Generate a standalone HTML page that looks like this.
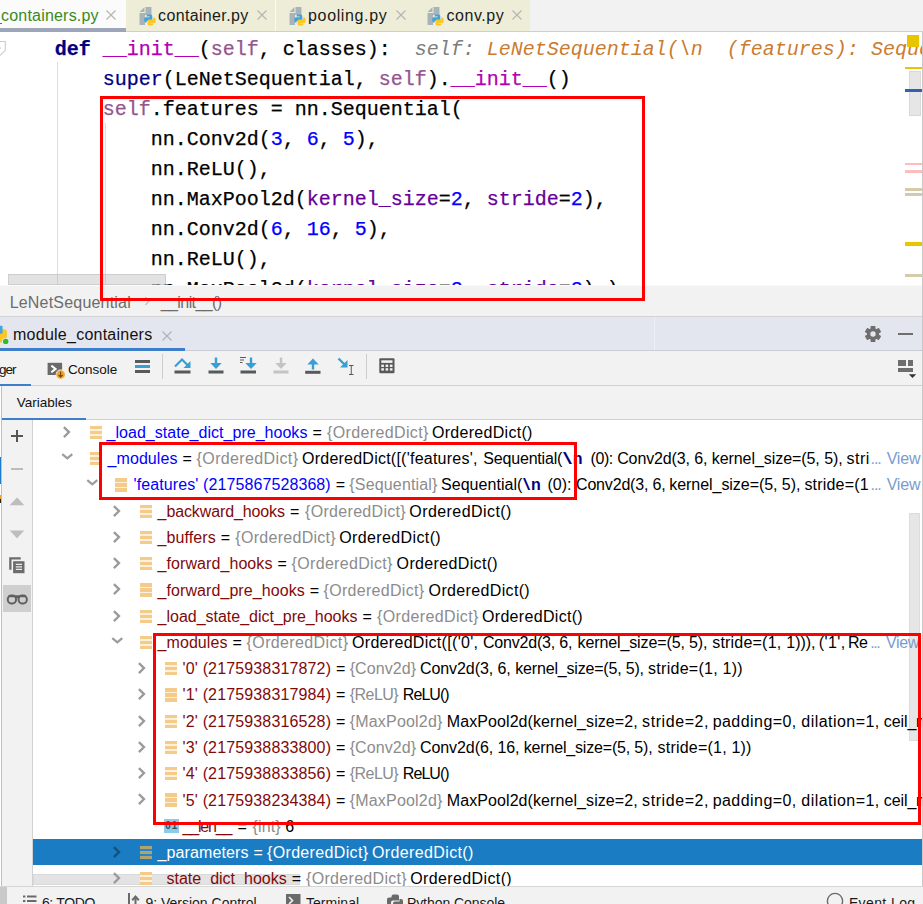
<!DOCTYPE html>
<html><head><meta charset="utf-8"><title>PyCharm</title>
<style>
html,body{margin:0;padding:0;}
body{width:923px;height:904px;overflow:hidden;position:relative;background:#fff;font-family:"Liberation Sans",sans-serif;font-size:16px;color:#000;}
#root{position:absolute;left:0;top:0;width:923px;height:904px;overflow:hidden;}
#root div, #root svg{position:absolute;}
.t{white-space:pre;line-height:20px;height:20px;font-size:16px;}
.code{font-family:"Liberation Mono",monospace;font-size:20px;-webkit-text-stroke:0.25px;white-space:pre;line-height:30px;height:30px;color:#000;}
.kw{color:#000080;font-weight:bold;}
.bi{color:#000080;}
.mg{color:#b200b2;}
.sf{color:#94558d;}
.nm{color:#0000ff;}
.kwa{color:#660099;}
.hg{color:#7d7d7d;font-style:italic;-webkit-text-stroke:0;}
.ho{color:#cb7b30;font-style:italic;-webkit-text-stroke:0;}
.redbox{border:3px solid #ff0000;box-sizing:border-box;}
</style></head><body>
<div id="root">
<div style="left:0;top:0;width:923px;height:31px;background:#f2f2f2;"></div>
<div style="left:0;top:31px;width:923px;height:1px;background:#cfcfcf;"></div>
<div style="left:0;top:0;width:126px;height:28px;background:#fbfbfb;"></div>
<div style="left:0;top:28px;width:126px;height:4px;background:#9da6b9;"></div>
<div style="left:126px;top:0;width:404px;height:31px;background:#eeeed8;"></div>
<div style="left:275px;top:0;width:1px;height:31px;background:#fbfbe9;"></div>
<div class="t" style="left:1.00px;top:6.00px;color:#3a8a1c;letter-spacing:0.203px;">containers.py</div>
<div style="left:0;top:23px;width:2px;height:1px;background:#3a8a1c;"></div>
<svg style="left:106px;top:10.3px" width="10" height="10" viewBox="0 0 10 10"><path d="M0.5 0.5 L9.5 9.5 M9.5 0.5 L0.5 9.5" stroke="#b4b4b4" stroke-width="1.1" fill="none"/></svg>
<svg style="left:138.6px;top:7.2px" width="18" height="20" viewBox="0 0 18 20"><path d="M0.5 5 L5.5 0 L5.5 5 Z" fill="#a9b3ba"/><path d="M6.5 0 H12.5 V8 H6 V18 H0.5 V6 H6.5 Z" fill="#a9b3ba"/><path d="M9 7.6 h2.6 a1.7 1.7 0 0 1 1.7 1.7 v3 a1.4 1.4 0 0 1 -1.4 1.4 h-3 a1.4 1.4 0 0 0 -1.4 1.4 v0.5 h-0.6 a1.6 1.6 0 0 1 -1.6 -1.6 v-2.2 a1.6 1.6 0 0 1 1.6 -1.6 h3.8 v-0.6 h-3.1 v-0.6 a1.4 1.4 0 0 1 1.4 -1.4 z" fill="#41a2dc"/><path d="M12.9 18.6 h-2.6 a1.7 1.7 0 0 1 -1.7 -1.7 v-3 a1.4 1.4 0 0 1 1.4 -1.4 h3 a1.4 1.4 0 0 0 1.4 -1.4 v-0.5 h0.6 a1.6 1.6 0 0 1 1.6 1.6 v2.2 a1.6 1.6 0 0 1 -1.6 1.6 h-3.8 v0.6 h3.1 v0.6 a1.4 1.4 0 0 1 -1.4 1.4 z" fill="#fcc624"/></svg>
<div class="t" style="left:158.10px;top:6.00px;color:#1a1a1a;letter-spacing:0.347px;">container.py</div>
<svg style="left:256.5px;top:10.3px" width="10" height="10" viewBox="0 0 10 10"><path d="M0.5 0.5 L9.5 9.5 M9.5 0.5 L0.5 9.5" stroke="#b4b4b4" stroke-width="1.1" fill="none"/></svg>
<svg style="left:288.6px;top:7.2px" width="18" height="20" viewBox="0 0 18 20"><path d="M0.5 5 L5.5 0 L5.5 5 Z" fill="#a9b3ba"/><path d="M6.5 0 H12.5 V8 H6 V18 H0.5 V6 H6.5 Z" fill="#a9b3ba"/><path d="M9 7.6 h2.6 a1.7 1.7 0 0 1 1.7 1.7 v3 a1.4 1.4 0 0 1 -1.4 1.4 h-3 a1.4 1.4 0 0 0 -1.4 1.4 v0.5 h-0.6 a1.6 1.6 0 0 1 -1.6 -1.6 v-2.2 a1.6 1.6 0 0 1 1.6 -1.6 h3.8 v-0.6 h-3.1 v-0.6 a1.4 1.4 0 0 1 1.4 -1.4 z" fill="#41a2dc"/><path d="M12.9 18.6 h-2.6 a1.7 1.7 0 0 1 -1.7 -1.7 v-3 a1.4 1.4 0 0 1 1.4 -1.4 h3 a1.4 1.4 0 0 0 1.4 -1.4 v-0.5 h0.6 a1.6 1.6 0 0 1 1.6 1.6 v2.2 a1.6 1.6 0 0 1 -1.6 1.6 h-3.8 v0.6 h3.1 v0.6 a1.4 1.4 0 0 1 -1.4 1.4 z" fill="#fcc624"/></svg>
<div class="t" style="left:308.10px;top:6.00px;color:#1a1a1a;letter-spacing:0.628px;">pooling.py</div>
<svg style="left:395.5px;top:10.3px" width="10" height="10" viewBox="0 0 10 10"><path d="M0.5 0.5 L9.5 9.5 M9.5 0.5 L0.5 9.5" stroke="#b4b4b4" stroke-width="1.1" fill="none"/></svg>
<svg style="left:426.6px;top:7.2px" width="18" height="20" viewBox="0 0 18 20"><path d="M0.5 5 L5.5 0 L5.5 5 Z" fill="#a9b3ba"/><path d="M6.5 0 H12.5 V8 H6 V18 H0.5 V6 H6.5 Z" fill="#a9b3ba"/><path d="M9 7.6 h2.6 a1.7 1.7 0 0 1 1.7 1.7 v3 a1.4 1.4 0 0 1 -1.4 1.4 h-3 a1.4 1.4 0 0 0 -1.4 1.4 v0.5 h-0.6 a1.6 1.6 0 0 1 -1.6 -1.6 v-2.2 a1.6 1.6 0 0 1 1.6 -1.6 h3.8 v-0.6 h-3.1 v-0.6 a1.4 1.4 0 0 1 1.4 -1.4 z" fill="#41a2dc"/><path d="M12.9 18.6 h-2.6 a1.7 1.7 0 0 1 -1.7 -1.7 v-3 a1.4 1.4 0 0 1 1.4 -1.4 h3 a1.4 1.4 0 0 0 1.4 -1.4 v-0.5 h0.6 a1.6 1.6 0 0 1 1.6 1.6 v2.2 a1.6 1.6 0 0 1 -1.6 1.6 h-3.8 v0.6 h3.1 v0.6 a1.4 1.4 0 0 1 -1.4 1.4 z" fill="#fcc624"/></svg>
<div class="t" style="left:446.60px;top:6.00px;color:#1a1a1a;letter-spacing:0.524px;">conv.py</div>
<svg style="left:511.5px;top:10.3px" width="10" height="10" viewBox="0 0 10 10"><path d="M0.5 0.5 L9.5 9.5 M9.5 0.5 L0.5 9.5" stroke="#b4b4b4" stroke-width="1.1" fill="none"/></svg>
<div id="editor" style="left:0;top:32px;width:922px;height:254px;background:#fff;overflow:hidden;">
<div class="code" style="left:54.7px;top:3px;"><span class="kw">def</span> <span class="mg">__init__</span>(<span class="sf">self</span>, classes):  <span class="hg">self: </span><span class="ho">LeNetSequential(\n  (features): Sequential(\n</span></div>
<div class="code" style="left:102.7px;top:33px;"><span class="bi">super</span>(LeNetSequential, <span class="sf">self</span>).<span class="mg">__init__</span>()</div>
<div class="code" style="left:102.7px;top:63px;"><span class="sf">self</span>.features = nn.Sequential(</div>
<div class="code" style="left:150.7px;top:93px;">nn.Conv2d(<span class="nm">3</span>, <span class="nm">6</span>, <span class="nm">5</span>),</div>
<div class="code" style="left:150.7px;top:123px;">nn.ReLU(),</div>
<div class="code" style="left:150.7px;top:153px;">nn.MaxPool2d(<span class="kwa">kernel_size</span>=<span class="nm">2</span>, <span class="kwa">stride</span>=<span class="nm">2</span>),</div>
<div class="code" style="left:150.7px;top:183px;">nn.Conv2d(<span class="nm">6</span>, <span class="nm">16</span>, <span class="nm">5</span>),</div>
<div class="code" style="left:150.7px;top:213px;">nn.ReLU(),</div>
<div class="code" style="left:150.7px;top:243px;">nn.MaxPool2d(<span class="kwa">kernel_size</span>=<span class="nm">2</span>, <span class="kwa">stride</span>=<span class="nm">2</span>),)</div>
<div style="left:57px;top:30px;width:1px;height:230px;background:#dcdcdc;"></div>
<div style="left:105px;top:91px;width:1px;height:170px;background:#dcdcdc;"></div>
<svg style="left:0;top:8.3px" width="8" height="16" viewBox="0 0 8 16"><path d="M-1 1.5 H5.3 V10.3 L0.3 15.3 H-1" fill="#fff" stroke="#cbcbcb" stroke-width="1.1"/><path d="M-1 8 H1" stroke="#c4c4c4" stroke-width="1"/></svg>
<div style="left:7.5px;top:242px;width:158px;height:11.3px;background:rgba(190,190,190,0.45);box-shadow:inset 0 0 0 1px rgba(170,170,170,0.35);"></div>
<div style="left:907px;top:3px;width:12px;height:12px;background:#e9c500;"></div>
<div style="left:905px;top:35px;width:17px;height:2px;background:#e9c500;"></div>
<div style="left:909px;top:39px;width:12px;height:45px;background:#e6e6e6;box-shadow:inset 0 0 0 1px #d8d8d8;"></div>
<div style="left:905px;top:57px;width:17px;height:3px;background:#3a5faa;"></div>
<div style="left:905px;top:131px;width:17px;height:2px;background:#ffbcbc;"></div>
<div style="left:905px;top:138px;width:17px;height:3px;background:#ffbcbc;"></div>
<div style="left:905px;top:156px;width:17px;height:3px;background:#d6cba8;"></div>
<div style="left:905px;top:161px;width:17px;height:3px;background:#d6cba8;"></div>
<div style="left:905px;top:210px;width:17px;height:4px;background:#e9c500;"></div>
<div style="left:905px;top:242px;width:17px;height:3px;background:#d6cba8;"></div>
</div>
<div style="left:0;top:285px;width:923px;height:1px;background:#fbfbfb;"></div>
<div id="crumb" style="left:0;top:286px;width:923px;height:30px;background:#f2f2f2;"></div>
<div style="left:0;top:316px;width:923px;height:1px;background:#d4d4d4;"></div>
<div class="t" style="left:9.70px;top:293.00px;color:#6c6c6c;letter-spacing:0.192px;">LeNetSequential</div>
<svg style="left:144px;top:295.5px" width="7" height="10" viewBox="0 0 7 10"><path d="M1.5 1 L5 5 L1.5 9" fill="none" stroke="#b0b0b0" stroke-width="1.1"/></svg>
<div class="t" style="left:160.70px;top:293.00px;color:#6c6c6c;letter-spacing:-0.578px;">__init__()</div>
<div id="dbghead" style="left:0;top:317px;width:923px;height:33px;background:#e3e6ef;"></div>
<div style="left:654px;top:317px;width:1px;height:33px;background:#eef0f6;"></div>
<div style="left:0;top:350px;width:923px;height:1px;background:#c9ccd4;"></div>
<div style="left:0;top:347.5px;width:184.5px;height:3.3px;background:#3f7fc9;"></div>
<svg style="left:0;top:322px" width="12" height="24" viewBox="0 0 12 24"><path d="M-4 7.3 H4.5 A2.4 2.4 0 0 1 6.9 9.7 V15 A2.6 2.6 0 0 1 4.3 17.6 H2.5 V20.6 H-4 Z" fill="#fcc624"/><rect x="-4" y="3.8" width="6.6" height="8" rx="1.2" fill="#4aa3dc"/><circle cx="5.7" cy="19.4" r="3.5" fill="#e3e6ef"/><circle cx="5.7" cy="19.4" r="2.7" fill="#24c024"/></svg>
<div class="t" style="left:13.00px;top:325.00px;color:#111;letter-spacing:0.250px;">module_containers</div>
<svg style="left:161.5px;top:331px" width="10" height="10" viewBox="0 0 10 10"><path d="M0.5 0.5 L9.5 9.5 M9.5 0.5 L0.5 9.5" stroke="#aeb1b8" stroke-width="1.1" fill="none"/></svg>
<svg style="left:864px;top:325px" width="18" height="18" viewBox="-9 -9 18 18"><g fill="#6e6e6e"><circle r="6.1"/>
<rect x="-2.4" y="-8.1" width="4.8" height="16.2" rx="0.5"/><rect x="-2.4" y="-8.1" width="4.8" height="16.2" rx="0.5" transform="rotate(60)"/><rect x="-2.4" y="-8.1" width="4.8" height="16.2" rx="0.5" transform="rotate(120)"/></g><circle r="2.7" fill="#e3e6ef"/></svg>
<div style="left:898px;top:333px;width:15px;height:2px;background:#6e6e6e;"></div>
<div id="toolbar" style="left:0;top:351px;width:923px;height:34px;background:#f2f2f2;"></div>
<div style="left:0;top:385px;width:923px;height:1px;background:#d1d1d1;"></div>
<div style="left:0;top:384px;width:31px;height:2px;background:#3f7fc9;"></div>
<div class="t" style="left:-1.09px;top:360.00px;color:#111;font-size:13.5px;letter-spacing:-0.915px;">ger</div>
<svg style="left:47px;top:362px" width="19" height="18" viewBox="0 0 19 18"><rect x="0.6" y="0.8" width="14.5" height="12.2" fill="#6a6a6a"/><path d="M4.3 3.6 L8.6 6.9 L4.3 10.2" fill="none" stroke="#fff" stroke-width="2"/><circle cx="13.6" cy="12.5" r="4.9" fill="#f2f2f2"/><circle cx="13.6" cy="12.5" r="4.3" fill="#f4a62a"/><path d="M13.6 9.6 V14.8 M11.5 12.8 L13.6 15 L15.7 12.8" fill="none" stroke="#6b4300" stroke-width="1.1"/></svg>
<div class="t" style="left:67.91px;top:360.00px;color:#111;font-size:13.5px;letter-spacing:-0.042px;">Console</div>
<div style="left:134.5px;top:360px;width:15px;height:3px;background:#595959;"></div>
<div style="left:134.5px;top:365px;width:15px;height:3px;background:#389fd6;"></div>
<div style="left:134.5px;top:370px;width:15px;height:3px;background:#595959;"></div>
<div style="left:162px;top:354px;width:1px;height:25px;background:#cdcdcd;"></div>
<div style="left:366px;top:354px;width:1px;height:25px;background:#cdcdcd;"></div>
<svg style="left:173px;top:355px" width="20" height="20" viewBox="0 0 20 20"><path d="M2 11.5 L9 4.5 L15 10.5" fill="none" stroke="#389fd6" stroke-width="2.2"/><path d="M17.5 6 V13 H10.5 Z" fill="#389fd6"/><rect x="1.5" y="15.5" width="16" height="3" fill="#595959"/></svg>
<svg style="left:206px;top:355px" width="20" height="20" viewBox="0 0 20 20"><path d="M10 2.5 V10" stroke="#389fd6" stroke-width="2.4" fill="none"/><path d="M4.3 8 H15.7 L10 14 Z" fill="#389fd6"/><rect x="2.5" y="15.5" width="15" height="3" fill="#595959"/></svg>
<svg style="left:238px;top:355px" width="22" height="20" viewBox="0 0 22 20"><path d="M13 2.5 V10" stroke="#389fd6" stroke-width="2.4" fill="none"/><path d="M7.3 8 H18.7 L13 14 Z" fill="#389fd6"/><rect x="2.5" y="15.5" width="15.5" height="3" fill="#595959"/><path d="M2 2.5 H8 M2 5 H6 M2 7.5 H4.5" stroke="#595959" stroke-width="1.1"/></svg>
<svg style="left:271px;top:355px" width="20" height="20" viewBox="0 0 20 20"><path d="M10 2.5 V10" stroke="#c4c4c4" stroke-width="2.4" fill="none"/><path d="M4.3 8 H15.7 L10 14 Z" fill="#c4c4c4"/><rect x="2.5" y="15.5" width="15" height="3" fill="#c4c4c4"/></svg>
<svg style="left:303px;top:355px" width="20" height="20" viewBox="0 0 20 20"><path d="M10 14.5 V8" stroke="#389fd6" stroke-width="2.4" fill="none"/><path d="M4.3 9.5 H15.7 L10 3.5 Z" fill="#389fd6"/><rect x="2.2" y="15.8" width="15.3" height="3" fill="#595959"/></svg>
<svg style="left:336px;top:355px" width="22" height="22" viewBox="0 0 22 22"><path d="M2.5 3.5 L8.5 9.5" stroke="#389fd6" stroke-width="2.4" fill="none"/><path d="M11.5 5 V12.5 H4 Z" fill="#389fd6"/><path d="M13 10.5 H17.5 M13 19.5 H17.5 M15.25 10.5 V19.5" stroke="#595959" stroke-width="1" fill="none"/></svg>
<svg style="left:379px;top:358px" width="16" height="16" viewBox="0 0 16 16"><rect x="0.3" y="0.3" width="15.2" height="15" rx="1" fill="#595959"/><rect x="2.3" y="2.3" width="11.2" height="2.6" fill="#f2f2f2"/><rect x="2.3" y="6.6" width="2.6" height="2.4" fill="#f2f2f2"/><rect x="6.6" y="6.6" width="2.6" height="2.4" fill="#f2f2f2"/><rect x="10.9" y="6.6" width="2.6" height="2.4" fill="#f2f2f2"/><rect x="2.3" y="10.2" width="2.6" height="2.4" fill="#f2f2f2"/><rect x="6.6" y="10.2" width="2.6" height="2.4" fill="#f2f2f2"/><rect x="10.9" y="10.2" width="2.6" height="2.4" fill="#f2f2f2"/></svg>
<div style="left:897.5px;top:360px;width:8.5px;height:6px;background:#6e6e6e;"></div>
<div style="left:908px;top:360px;width:4.5px;height:6px;background:#6e6e6e;"></div>
<div style="left:897.5px;top:367.5px;width:15px;height:4.5px;background:#6e6e6e;"></div>
<svg style="left:908px;top:374px" width="9" height="5" viewBox="0 0 9 5"><path d="M0.8 0.2 H8.2 L4.5 4 Z" fill="#333"/></svg>
<div id="varhead" style="left:0;top:386px;width:923px;height:33px;background:#f2f2f2;"></div>
<div style="left:0;top:419px;width:923px;height:1px;background:#d1d1d1;"></div>
<div class="t" style="left:16.81px;top:393.00px;color:#111;font-size:13.5px;">Variables</div>
<div id="tree" style="left:33px;top:420px;width:889px;height:466px;background:#fff;overflow:hidden;">
<div style="left:876px;top:93px;width:11px;height:228px;background:#e6e6e6;box-shadow:inset 0 0 0 1px #dcdcdc;"></div>
<div style="left:0px;top:454px;width:267px;height:11px;background:#e3e3e3;box-shadow:inset 0 0 0 1px #d9d9d9;"></div>
<svg style="left:29.0px;top:5.9px" width="10" height="13" viewBox="0 0 10 13"><path d="M1.9 1.1 L7 6.1 L1.9 11.1" fill="none" stroke="#9b9b9b" stroke-width="2.3"/></svg>
<div style="left:57.1px;top:5.8px;width:12px;height:13.4px;background:#fdf1de;"></div><div style="left:57.1px;top:5.8px;width:12px;height:3.3px;background:#f5cb8a;"></div><div style="left:57.1px;top:10.9px;width:12px;height:3.3px;background:#f5cb8a;"></div><div style="left:57.1px;top:15.9px;width:12px;height:3.3px;background:#f5cb8a;"></div>
<div class="t" style="left:279.50px;top:3.00px;color:#000;letter-spacing:0.556px;">=</div>
<div class="t" style="left:73.60px;top:3.00px;color:#0000ff;letter-spacing:0.026px;">_load_state_dict_pre_hooks</div>
<div class="t" style="left:294.00px;top:3.00px;color:#8c8c8c;letter-spacing:0.372px;">{OrderedDict}</div>
<div class="t" style="left:399.00px;top:3.00px;color:#000;letter-spacing:0.291px;">OrderedDict()</div>
<svg style="left:28.4px;top:32.9px" width="13" height="8" viewBox="0 0 13 8"><path d="M1.3 1.2 L6.3 5.4 L11.3 1.2" fill="none" stroke="#9b9b9b" stroke-width="2.2"/></svg>
<div style="left:57.1px;top:32.1px;width:12px;height:13.4px;background:#fdf1de;"></div><div style="left:57.1px;top:32.1px;width:12px;height:3.3px;background:#f5cb8a;"></div><div style="left:57.1px;top:37.1px;width:12px;height:3.3px;background:#f5cb8a;"></div><div style="left:57.1px;top:42.2px;width:12px;height:3.3px;background:#f5cb8a;"></div>
<div class="t" style="left:149.50px;top:29.00px;color:#000;letter-spacing:0.556px;">=</div>
<div class="t" style="left:74.60px;top:29.00px;color:#0000ff;letter-spacing:0.061px;">_modules</div>
<div class="t" style="left:163.60px;top:29.00px;color:#8c8c8c;letter-spacing:0.372px;">{OrderedDict}</div>
<div class="t" style="left:269.00px;top:29.00px;color:#000;letter-spacing:0.237px;">OrderedDict([('features',</div>
<div class="t" style="left:450.30px;top:29.00px;color:#000;letter-spacing:-0.185px;">Sequential(</div>
<div class="t" style="left:529.60px;top:29.00px;color:#000080;transform:scaleX(2.002);transform-origin:0 0;">\</div>
<div class="t" style="left:539.70px;top:29.00px;color:#000080;font-weight:bold;letter-spacing:-0.773px;">n</div>
<div class="t" style="left:557.60px;top:29.00px;color:#000;letter-spacing:-0.467px;">(0):</div>
<div class="t" style="left:584.20px;top:29.00px;color:#000;letter-spacing:-0.119px;">Conv2d(3, 6,</div>
<div class="t" style="left:678.70px;top:29.00px;color:#000;letter-spacing:-0.059px;">kernel_size=(5, 5),</div>
<div class="t" style="left:813.60px;top:29.00px;color:#000;letter-spacing:0.457px;">stri</div>
<div class="t" style="left:837.50px;top:29.00px;color:#7ea3d3;letter-spacing:-1.068px;">...</div>
<div class="t" style="left:853.70px;top:29.00px;color:#779dd0;letter-spacing:-0.197px;">View</div>
<svg style="left:53.4px;top:59.2px" width="13" height="8" viewBox="0 0 13 8"><path d="M1.3 1.2 L6.3 5.4 L11.3 1.2" fill="none" stroke="#9b9b9b" stroke-width="2.2"/></svg>
<div style="left:82.2px;top:58.3px;width:12px;height:13.4px;background:#fdf1de;"></div><div style="left:82.2px;top:58.3px;width:12px;height:3.3px;background:#f5cb8a;"></div><div style="left:82.2px;top:63.4px;width:12px;height:3.3px;background:#f5cb8a;"></div><div style="left:82.2px;top:68.4px;width:12px;height:3.3px;background:#f5cb8a;"></div>
<div class="t" style="left:302.80px;top:55.00px;color:#000;letter-spacing:0.556px;">=</div>
<div class="t" style="left:100.60px;top:55.00px;color:#0000ff;letter-spacing:0.096px;">'features' (2175867528368)</div>
<div class="t" style="left:316.30px;top:55.00px;color:#8c8c8c;letter-spacing:0.163px;">{Sequential}</div>
<div class="t" style="left:408.00px;top:55.00px;color:#000;letter-spacing:0.045px;">Sequential(</div>
<div class="t" style="left:489.60px;top:55.00px;color:#000080;transform:scaleX(1.602);transform-origin:0 0;">\</div>
<div class="t" style="left:498.00px;top:55.00px;color:#000080;font-weight:bold;letter-spacing:-0.773px;">n</div>
<div class="t" style="left:514.60px;top:55.00px;color:#000;letter-spacing:-0.067px;">(0):</div>
<div class="t" style="left:543.00px;top:55.00px;color:#000;letter-spacing:-0.174px;">Conv2d(3, 6,</div>
<div class="t" style="left:636.30px;top:55.00px;color:#000;letter-spacing:-0.053px;">kernel_size=(5, 5),</div>
<div class="t" style="left:771.40px;top:55.00px;color:#000;letter-spacing:0.201px;">stride=(1</div>
<div class="t" style="left:837.50px;top:55.00px;color:#7ea3d3;letter-spacing:-1.068px;">...</div>
<div class="t" style="left:853.70px;top:55.00px;color:#779dd0;letter-spacing:-0.197px;">View</div>
<svg style="left:79.0px;top:84.6px" width="10" height="13" viewBox="0 0 10 13"><path d="M1.9 1.1 L7 6.1 L1.9 11.1" fill="none" stroke="#9b9b9b" stroke-width="2.3"/></svg>
<div style="left:107.4px;top:84.6px;width:12px;height:13.4px;background:#fdf1de;"></div><div style="left:107.4px;top:84.6px;width:12px;height:3.3px;background:#f5cb8a;"></div><div style="left:107.4px;top:89.6px;width:12px;height:3.3px;background:#f5cb8a;"></div><div style="left:107.4px;top:94.7px;width:12px;height:3.3px;background:#f5cb8a;"></div>
<div class="t" style="left:257.10px;top:82.00px;color:#000;letter-spacing:0.556px;">=</div>
<div class="t" style="left:124.60px;top:82.00px;color:#7f0a0a;letter-spacing:-0.112px;">_backward_hooks</div>
<div class="t" style="left:272.00px;top:82.00px;color:#8c8c8c;letter-spacing:0.314px;">{OrderedDict}</div>
<div class="t" style="left:376.30px;top:82.00px;color:#000;letter-spacing:0.433px;">OrderedDict()</div>
<svg style="left:79.0px;top:110.9px" width="10" height="13" viewBox="0 0 10 13"><path d="M1.9 1.1 L7 6.1 L1.9 11.1" fill="none" stroke="#9b9b9b" stroke-width="2.3"/></svg>
<div style="left:107.4px;top:110.8px;width:12px;height:13.4px;background:#fdf1de;"></div><div style="left:107.4px;top:110.8px;width:12px;height:3.3px;background:#f5cb8a;"></div><div style="left:107.4px;top:115.8px;width:12px;height:3.3px;background:#f5cb8a;"></div><div style="left:107.4px;top:120.9px;width:12px;height:3.3px;background:#f5cb8a;"></div>
<div class="t" style="left:187.80px;top:108.00px;color:#000;letter-spacing:0.556px;">=</div>
<div class="t" style="left:124.60px;top:108.00px;color:#7f0a0a;letter-spacing:0.082px;">_buffers</div>
<div class="t" style="left:202.30px;top:108.00px;color:#8c8c8c;letter-spacing:0.289px;">{OrderedDict}</div>
<div class="t" style="left:306.30px;top:108.00px;color:#000;letter-spacing:0.374px;">OrderedDict()</div>
<svg style="left:79.0px;top:137.1px" width="10" height="13" viewBox="0 0 10 13"><path d="M1.9 1.1 L7 6.1 L1.9 11.1" fill="none" stroke="#9b9b9b" stroke-width="2.3"/></svg>
<div style="left:107.4px;top:137.0px;width:12px;height:13.4px;background:#fdf1de;"></div><div style="left:107.4px;top:137.0px;width:12px;height:3.3px;background:#f5cb8a;"></div><div style="left:107.4px;top:142.1px;width:12px;height:3.3px;background:#f5cb8a;"></div><div style="left:107.4px;top:147.1px;width:12px;height:3.3px;background:#f5cb8a;"></div>
<div class="t" style="left:244.50px;top:134.00px;color:#000;letter-spacing:0.556px;">=</div>
<div class="t" style="left:124.60px;top:134.00px;color:#7f0a0a;letter-spacing:0.074px;">_forward_hooks</div>
<div class="t" style="left:258.60px;top:134.00px;color:#8c8c8c;letter-spacing:0.322px;">{OrderedDict}</div>
<div class="t" style="left:363.60px;top:134.00px;color:#000;letter-spacing:0.349px;">OrderedDict()</div>
<svg style="left:79.0px;top:163.4px" width="10" height="13" viewBox="0 0 10 13"><path d="M1.9 1.1 L7 6.1 L1.9 11.1" fill="none" stroke="#9b9b9b" stroke-width="2.3"/></svg>
<div style="left:107.4px;top:163.3px;width:12px;height:13.4px;background:#fdf1de;"></div><div style="left:107.4px;top:163.3px;width:12px;height:3.3px;background:#f5cb8a;"></div><div style="left:107.4px;top:168.3px;width:12px;height:3.3px;background:#f5cb8a;"></div><div style="left:107.4px;top:173.4px;width:12px;height:3.3px;background:#f5cb8a;"></div>
<div class="t" style="left:276.80px;top:161.00px;color:#000;letter-spacing:0.556px;">=</div>
<div class="t" style="left:124.60px;top:161.00px;color:#7f0a0a;letter-spacing:0.073px;">_forward_pre_hooks</div>
<div class="t" style="left:290.60px;top:161.00px;color:#8c8c8c;letter-spacing:0.289px;">{OrderedDict}</div>
<div class="t" style="left:395.60px;top:161.00px;color:#000;letter-spacing:0.349px;">OrderedDict()</div>
<svg style="left:79.0px;top:189.6px" width="10" height="13" viewBox="0 0 10 13"><path d="M1.9 1.1 L7 6.1 L1.9 11.1" fill="none" stroke="#9b9b9b" stroke-width="2.3"/></svg>
<div style="left:107.4px;top:189.5px;width:12px;height:13.4px;background:#fdf1de;"></div><div style="left:107.4px;top:189.5px;width:12px;height:3.3px;background:#f5cb8a;"></div><div style="left:107.4px;top:194.6px;width:12px;height:3.3px;background:#f5cb8a;"></div><div style="left:107.4px;top:199.6px;width:12px;height:3.3px;background:#f5cb8a;"></div>
<div class="t" style="left:329.50px;top:187.00px;color:#000;letter-spacing:0.556px;">=</div>
<div class="t" style="left:124.60px;top:187.00px;color:#7f0a0a;letter-spacing:-0.014px;">_load_state_dict_pre_hooks</div>
<div class="t" style="left:344.00px;top:187.00px;color:#8c8c8c;letter-spacing:0.372px;">{OrderedDict}</div>
<div class="t" style="left:449.00px;top:187.00px;color:#000;letter-spacing:0.316px;">OrderedDict()</div>
<svg style="left:78.4px;top:216.7px" width="13" height="8" viewBox="0 0 13 8"><path d="M1.3 1.2 L6.3 5.4 L11.3 1.2" fill="none" stroke="#9b9b9b" stroke-width="2.2"/></svg>
<div style="left:107.4px;top:215.8px;width:12px;height:13.4px;background:#fdf1de;"></div><div style="left:107.4px;top:215.8px;width:12px;height:3.3px;background:#f5cb8a;"></div><div style="left:107.4px;top:220.8px;width:12px;height:3.3px;background:#f5cb8a;"></div><div style="left:107.4px;top:225.9px;width:12px;height:3.3px;background:#f5cb8a;"></div>
<div class="t" style="left:199.50px;top:213.00px;color:#000;letter-spacing:0.556px;">=</div>
<div class="t" style="left:124.60px;top:213.00px;color:#7f0a0a;letter-spacing:0.061px;">_modules</div>
<div class="t" style="left:213.60px;top:213.00px;color:#8c8c8c;letter-spacing:0.372px;">{OrderedDict}</div>
<div class="t" style="left:319.00px;top:213.00px;color:#000;letter-spacing:0.306px;">OrderedDict([('0',</div>
<div class="t" style="left:449.90px;top:213.00px;color:#000;letter-spacing:-0.183px;">Conv2d(3, 6,</div>
<div class="t" style="left:544.60px;top:213.00px;color:#000;letter-spacing:-0.120px;">kernel_size=(5, 5),</div>
<div class="t" style="left:679.20px;top:213.00px;color:#000;letter-spacing:0.207px;">stride=(1,</div>
<div class="t" style="left:753.30px;top:213.00px;color:#000;letter-spacing:-0.057px;">1))),</div>
<div class="t" style="left:785.80px;top:213.00px;color:#000;letter-spacing:0.380px;">('1',</div>
<div class="t" style="left:815.10px;top:213.00px;color:#000;letter-spacing:-0.653px;">Re</div>
<div class="t" style="left:837.30px;top:213.00px;color:#7ea3d3;letter-spacing:-1.468px;">...</div>
<div class="t" style="left:853.00px;top:213.00px;color:#779dd0;letter-spacing:-0.397px;">View</div>
<svg style="left:104.3px;top:242.1px" width="10" height="13" viewBox="0 0 10 13"><path d="M1.9 1.1 L7 6.1 L1.9 11.1" fill="none" stroke="#9b9b9b" stroke-width="2.3"/></svg>
<div style="left:132.1px;top:242.0px;width:12px;height:13.4px;background:#fdf1de;"></div><div style="left:132.1px;top:242.0px;width:12px;height:3.3px;background:#f5cb8a;"></div><div style="left:132.1px;top:247.1px;width:12px;height:3.3px;background:#f5cb8a;"></div><div style="left:132.1px;top:252.1px;width:12px;height:3.3px;background:#f5cb8a;"></div>
<div class="t" style="left:303.10px;top:239.00px;color:#000;letter-spacing:0.556px;">=</div>
<div class="t" style="left:149.60px;top:239.00px;color:#7f0a0a;letter-spacing:0.145px;">'0' (2175938317872)</div>
<div class="t" style="left:316.70px;top:239.00px;color:#8c8c8c;letter-spacing:0.081px;">{Conv2d}</div>
<div class="t" style="left:387.00px;top:239.00px;color:#000;letter-spacing:-0.083px;">Conv2d(3, 6,</div>
<div class="t" style="left:482.30px;top:239.00px;color:#000;letter-spacing:-0.187px;">kernel_size=(5, 5),</div>
<div class="t" style="left:615.10px;top:239.00px;color:#000;letter-spacing:0.266px;">stride=(1, 1))</div>
<svg style="left:104.3px;top:268.4px" width="10" height="13" viewBox="0 0 10 13"><path d="M1.9 1.1 L7 6.1 L1.9 11.1" fill="none" stroke="#9b9b9b" stroke-width="2.3"/></svg>
<div style="left:132.1px;top:268.3px;width:12px;height:13.4px;background:#fdf1de;"></div><div style="left:132.1px;top:268.3px;width:12px;height:3.3px;background:#f5cb8a;"></div><div style="left:132.1px;top:273.3px;width:12px;height:3.3px;background:#f5cb8a;"></div><div style="left:132.1px;top:278.4px;width:12px;height:3.3px;background:#f5cb8a;"></div>
<div class="t" style="left:303.10px;top:265.00px;color:#000;letter-spacing:0.556px;">=</div>
<div class="t" style="left:149.60px;top:265.00px;color:#7f0a0a;letter-spacing:0.145px;">'1' (2175938317984)</div>
<div class="t" style="left:316.70px;top:265.00px;color:#8c8c8c;letter-spacing:-0.519px;">{ReLU}</div>
<div class="t" style="left:369.80px;top:265.00px;color:#000;letter-spacing:-0.933px;">ReLU()</div>
<svg style="left:104.3px;top:294.6px" width="10" height="13" viewBox="0 0 10 13"><path d="M1.9 1.1 L7 6.1 L1.9 11.1" fill="none" stroke="#9b9b9b" stroke-width="2.3"/></svg>
<div style="left:132.1px;top:294.5px;width:12px;height:13.4px;background:#fdf1de;"></div><div style="left:132.1px;top:294.5px;width:12px;height:3.3px;background:#f5cb8a;"></div><div style="left:132.1px;top:299.6px;width:12px;height:3.3px;background:#f5cb8a;"></div><div style="left:132.1px;top:304.6px;width:12px;height:3.3px;background:#f5cb8a;"></div>
<div class="t" style="left:303.10px;top:292.00px;color:#000;letter-spacing:0.556px;">=</div>
<div class="t" style="left:149.60px;top:292.00px;color:#7f0a0a;letter-spacing:0.145px;">'2' (2175938316528)</div>
<div class="t" style="left:316.70px;top:292.00px;color:#8c8c8c;letter-spacing:0.197px;">{MaxPool2d}</div>
<div class="t" style="left:413.80px;top:292.00px;color:#000;letter-spacing:0.083px;">MaxPool2d(kernel_size=2,</div>
<div class="t" style="left:609.10px;top:292.00px;color:#000;letter-spacing:0.573px;">stride=2,</div>
<div class="t" style="left:679.70px;top:292.00px;color:#000;letter-spacing:0.441px;">padding=0,</div>
<div class="t" style="left:768.30px;top:292.00px;color:#000;letter-spacing:0.461px;">dilation=1,</div>
<div class="t" style="left:850.70px;top:292.00px;color:#000;letter-spacing:-0.027px;">ceil_</div>
<div class="t" style="left:883.10px;top:292.00px;color:#000;">mode=False)</div>
<svg style="left:104.3px;top:320.9px" width="10" height="13" viewBox="0 0 10 13"><path d="M1.9 1.1 L7 6.1 L1.9 11.1" fill="none" stroke="#9b9b9b" stroke-width="2.3"/></svg>
<div style="left:132.1px;top:320.8px;width:12px;height:13.4px;background:#fdf1de;"></div><div style="left:132.1px;top:320.8px;width:12px;height:3.3px;background:#f5cb8a;"></div><div style="left:132.1px;top:325.8px;width:12px;height:3.3px;background:#f5cb8a;"></div><div style="left:132.1px;top:330.9px;width:12px;height:3.3px;background:#f5cb8a;"></div>
<div class="t" style="left:303.10px;top:318.00px;color:#000;letter-spacing:0.556px;">=</div>
<div class="t" style="left:149.60px;top:318.00px;color:#7f0a0a;letter-spacing:0.145px;">'3' (2175938833800)</div>
<div class="t" style="left:316.70px;top:318.00px;color:#8c8c8c;letter-spacing:0.081px;">{Conv2d}</div>
<div class="t" style="left:387.00px;top:318.00px;color:#000;letter-spacing:-0.084px;">Conv2d(6, 16,</div>
<div class="t" style="left:490.80px;top:318.00px;color:#000;letter-spacing:-0.176px;">kernel_size=(5, 5),</div>
<div class="t" style="left:624.60px;top:318.00px;color:#000;letter-spacing:0.205px;">stride=(1, 1))</div>
<svg style="left:104.3px;top:347.1px" width="10" height="13" viewBox="0 0 10 13"><path d="M1.9 1.1 L7 6.1 L1.9 11.1" fill="none" stroke="#9b9b9b" stroke-width="2.3"/></svg>
<div style="left:132.1px;top:347.0px;width:12px;height:13.4px;background:#fdf1de;"></div><div style="left:132.1px;top:347.0px;width:12px;height:3.3px;background:#f5cb8a;"></div><div style="left:132.1px;top:352.1px;width:12px;height:3.3px;background:#f5cb8a;"></div><div style="left:132.1px;top:357.1px;width:12px;height:3.3px;background:#f5cb8a;"></div>
<div class="t" style="left:303.10px;top:344.00px;color:#000;letter-spacing:0.556px;">=</div>
<div class="t" style="left:149.60px;top:344.00px;color:#7f0a0a;letter-spacing:0.145px;">'4' (2175938833856)</div>
<div class="t" style="left:316.70px;top:344.00px;color:#8c8c8c;letter-spacing:-0.519px;">{ReLU}</div>
<div class="t" style="left:369.80px;top:344.00px;color:#000;letter-spacing:-0.933px;">ReLU()</div>
<svg style="left:104.3px;top:373.4px" width="10" height="13" viewBox="0 0 10 13"><path d="M1.9 1.1 L7 6.1 L1.9 11.1" fill="none" stroke="#9b9b9b" stroke-width="2.3"/></svg>
<div style="left:132.1px;top:373.3px;width:12px;height:13.4px;background:#fdf1de;"></div><div style="left:132.1px;top:373.3px;width:12px;height:3.3px;background:#f5cb8a;"></div><div style="left:132.1px;top:378.3px;width:12px;height:3.3px;background:#f5cb8a;"></div><div style="left:132.1px;top:383.4px;width:12px;height:3.3px;background:#f5cb8a;"></div>
<div class="t" style="left:303.10px;top:371.00px;color:#000;letter-spacing:0.556px;">=</div>
<div class="t" style="left:149.60px;top:371.00px;color:#7f0a0a;letter-spacing:0.145px;">'5' (2175938234384)</div>
<div class="t" style="left:316.70px;top:371.00px;color:#8c8c8c;letter-spacing:0.197px;">{MaxPool2d}</div>
<div class="t" style="left:413.80px;top:371.00px;color:#000;letter-spacing:0.083px;">MaxPool2d(kernel_size=2,</div>
<div class="t" style="left:609.10px;top:371.00px;color:#000;letter-spacing:0.573px;">stride=2,</div>
<div class="t" style="left:679.70px;top:371.00px;color:#000;letter-spacing:0.441px;">padding=0,</div>
<div class="t" style="left:768.30px;top:371.00px;color:#000;letter-spacing:0.461px;">dilation=1,</div>
<div class="t" style="left:850.70px;top:371.00px;color:#000;letter-spacing:-0.027px;">ceil_</div>
<div class="t" style="left:883.10px;top:371.00px;color:#000;">mode=False)</div>
<div style="left:130.5px;top:398.5px;width:15.2px;height:14.7px;background:#8ccbea;"></div><div class="t" style="left:132.16px;top:396.00px;color:#3a4f5f;font-size:10px;font-weight:bold;letter-spacing:1.152px;">01</div>
<div class="t" style="left:204.50px;top:397.00px;color:#000;letter-spacing:0.556px;">=</div>
<div class="t" style="left:149.60px;top:397.00px;color:#7f0a0a;letter-spacing:-1.191px;">__len__</div>
<div class="t" style="left:219.60px;top:397.00px;color:#8c8c8c;letter-spacing:0.129px;">{int}</div>
<div class="t" style="left:252.30px;top:397.00px;color:#000;letter-spacing:-0.198px;">6</div>
<div style="left:0;top:419.0px;width:890px;height:26px;background:#1a7dc4;"></div>
<svg style="left:79.0px;top:425.9px" width="10" height="13" viewBox="0 0 10 13"><path d="M1.9 1.1 L7 6.1 L1.9 11.1" fill="none" stroke="#17507c" stroke-width="2.3"/></svg>
<div style="left:107.4px;top:425.8px;width:12px;height:13.4px;background:#2a85c9;"></div><div style="left:107.4px;top:425.8px;width:12px;height:3.3px;background:#b0a46c;"></div><div style="left:107.4px;top:430.8px;width:12px;height:3.3px;background:#b0a46c;"></div><div style="left:107.4px;top:435.9px;width:12px;height:3.3px;background:#b0a46c;"></div>
<div class="t" style="left:220.50px;top:423.00px;color:#fff;letter-spacing:0.556px;">=</div>
<div class="t" style="left:124.60px;top:423.00px;color:#fff;letter-spacing:0.098px;">_parameters</div>
<div class="t" style="left:234.00px;top:423.00px;color:#fff;letter-spacing:0.339px;">{OrderedDict}</div>
<div class="t" style="left:339.00px;top:423.00px;color:#fff;letter-spacing:0.374px;">OrderedDict()</div>
<svg style="left:79.0px;top:452.1px" width="10" height="13" viewBox="0 0 10 13"><path d="M1.9 1.1 L7 6.1 L1.9 11.1" fill="none" stroke="#9b9b9b" stroke-width="2.3"/></svg>
<div style="left:107.4px;top:452.0px;width:12px;height:13.4px;background:#fdf1de;"></div><div style="left:107.4px;top:452.0px;width:12px;height:3.3px;background:#f5cb8a;"></div><div style="left:107.4px;top:457.1px;width:12px;height:3.3px;background:#f5cb8a;"></div><div style="left:107.4px;top:462.1px;width:12px;height:3.3px;background:#f5cb8a;"></div>
<div class="t" style="left:258.80px;top:449.00px;color:#000;letter-spacing:0.556px;">=</div>
<div class="t" style="left:124.60px;top:449.00px;color:#7f0a0a;letter-spacing:0.008px;">_state_dict_hooks</div>
<div class="t" style="left:273.00px;top:449.00px;color:#8c8c8c;letter-spacing:0.314px;">{OrderedDict}</div>
<div class="t" style="left:377.30px;top:449.00px;color:#000;letter-spacing:0.374px;">OrderedDict()</div>
</div>
<div id="lefttb" style="left:3px;top:420px;width:29px;height:466px;background:#f2f2f2;"></div>
<div style="left:32px;top:420px;width:1px;height:466px;background:#d1d1d1;"></div>
<div style="left:0;top:386px;width:2px;height:500px;background:#fff;"></div>
<div style="left:1px;top:386px;width:1px;height:500px;background:#c0c0c0;"></div>
<div style="left:2px;top:420px;width:1px;height:466px;background:#f2f2f2;"></div>
<div style="left:0;top:456.5px;width:1px;height:27px;background:#1a7dd0;"></div>
<div style="left:0;top:495px;width:1px;height:4px;background:#f0a020;"></div>
<div style="left:0;top:499px;width:1px;height:4px;background:#222;"></div>
<div style="left:10.8px;top:434.8px;width:12.4px;height:2.2px;background:#555;"></div>
<div style="left:15.9px;top:429.7px;width:2.2px;height:12.4px;background:#555;"></div>
<div style="left:10.8px;top:467.5px;width:12.4px;height:2.4px;background:#bcbcbc;"></div>
<svg style="left:9px;top:497px" width="16" height="9" viewBox="0 0 16 9"><path d="M0.7 8.2 L8 0.5 L15.3 8.2 Z" fill="#bdbdbd"/></svg>
<svg style="left:9px;top:529.6px" width="16" height="9" viewBox="0 0 16 9"><path d="M0.7 0.5 L8 8.2 L15.3 0.5 Z" fill="#bdbdbd"/></svg>
<svg style="left:9px;top:557px" width="17" height="18" viewBox="0 0 17 18"><path d="M0.2 0.3 H11.7 V2.6 H2.5 V12.7 H0.2 Z" fill="#6c6c6c"/><rect x="4.1" y="4.2" width="11.4" height="12" fill="#6c6c6c"/><path d="M6.8 7.3 H13 M6.8 9.8 H13 M6.8 12.3 H13" stroke="#ececec" stroke-width="1.3"/></svg>
<div style="left:3.2px;top:585px;width:27.7px;height:27px;background:#cfcfcf;"></div>
<svg style="left:6px;top:592px" width="23" height="14" viewBox="0 0 23 14"><g fill="none" stroke="#606060" stroke-width="2" stroke-linejoin="round"><rect x="1.8" y="3.6" width="8.2" height="7.8" rx="3.4" ry="3.6"/><rect x="12.6" y="3.6" width="8.2" height="7.8" rx="3.4" ry="3.6"/><path d="M2.5 4.2 H20 M9.8 5.2 H12.8"/></g></svg>
<div style="left:2px;top:418px;width:84px;height:2px;background:#3f7fc9;"></div>
<div id="bottombar" style="left:0;top:886px;width:923px;height:18px;background:#f2f2f2;"></div>
<div style="left:0;top:886px;width:923px;height:1px;background:#d6d6d6;"></div>
<div style="left:0;top:887px;width:7px;height:17px;background:#c9c9c9;"></div>
<svg style="left:23px;top:895px" width="14" height="10" viewBox="0 0 14 10"><path d="M0 1.5 H2.4 M4 1.5 H13.5 M0 6 H2.4 M4 6 H13.5" stroke="#6a6a6a" stroke-width="2"/></svg>
<svg style="left:126px;top:893px" width="14" height="12" viewBox="0 0 14 12"><path d="M3 0 V12 M9.5 12 V4.5 M6.2 7.2 L9.5 3.6 L12.8 7.2" fill="none" stroke="#6a6a6a" stroke-width="2"/></svg>
<svg style="left:286px;top:894px" width="15" height="11" viewBox="0 0 15 11"><rect x="0" y="0" width="14.5" height="11" fill="#6a6a6a"/><path d="M3 3 L6.5 6.5 L3 10" fill="none" stroke="#f2f2f2" stroke-width="1.6"/></svg>
<svg style="left:387px;top:894px" width="16" height="11" viewBox="0 0 16 11"><path d="M4.5 2.5 a2 2 0 0 1 2 -2 h3.5 a2 2 0 0 1 2 2 v4 h-6 a2 2 0 0 0 -2 2 v2.5 h-2 a2 2 0 0 1 -2 -2 v-3.5 a2 2 0 0 1 2 -2 h2.5 z M12.5 5 h1.5 a2 2 0 0 1 2 2 v4 h-10 v-1.5 a2 2 0 0 1 2 -2 h4.5 z" fill="#6a6a6a"/></svg>
<svg style="left:826px;top:891px" width="18" height="14" viewBox="0 0 18 14"><circle cx="9" cy="10" r="7.6" fill="none" stroke="#6a6a6a" stroke-width="1.4"/></svg>
<div class="t" style="left:41.89px;top:893.00px;color:#1a1a1a;font-size:14px;letter-spacing:-0.338px;">6: TODO</div>
<div class="t" style="left:145.39px;top:893.00px;color:#1a1a1a;font-size:14px;">9: Version Control</div>
<div class="t" style="left:305.89px;top:893.00px;color:#1a1a1a;font-size:14px;letter-spacing:0.046px;">Terminal</div>
<div class="t" style="left:406.89px;top:893.00px;color:#1a1a1a;font-size:14px;letter-spacing:-0.047px;">Python Console</div>
<div class="t" style="left:848.89px;top:893.00px;color:#1a1a1a;font-size:14px;letter-spacing:0.397px;">Event Log</div>
<div style="left:922px;top:32px;width:1px;height:854px;background:#c8c8c8;"></div>
<div class="redbox" style="left:100px;top:96px;width:545px;height:205px;"></div>
<div class="redbox" style="left:99px;top:442px;width:478px;height:58px;"></div>
<div class="redbox" style="left:153px;top:633px;width:768px;height:192px;"></div>
</div>
</body></html>
